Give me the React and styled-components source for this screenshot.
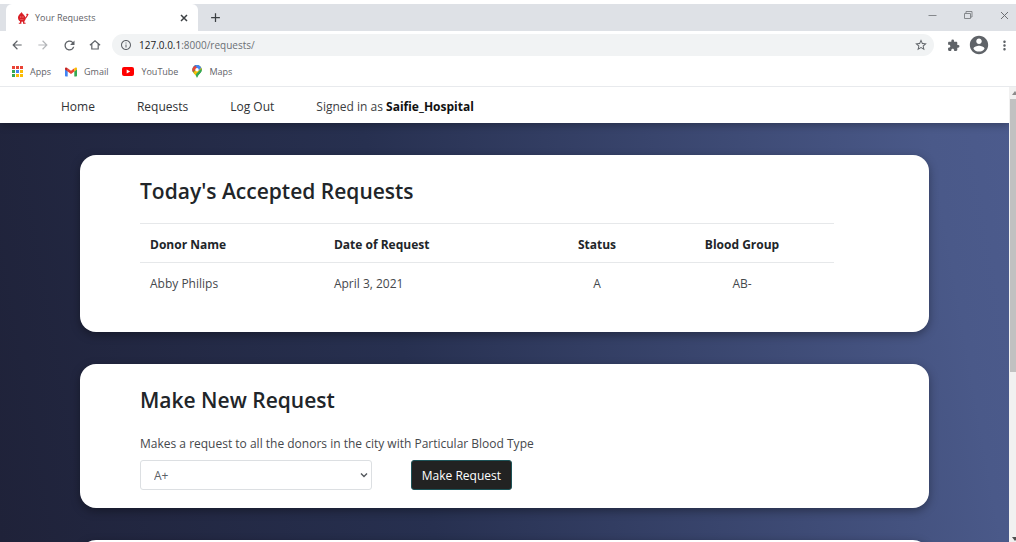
import React from "react";
import styled, { createGlobalStyle } from "styled-components";
import { MdStarBorder, MdExtension, MdMoreVert, MdArrowBack, MdArrowForward, MdRefresh, MdInfoOutline, MdAdd } from "react-icons/md";

const GlobalStyle = createGlobalStyle`
  * { box-sizing: border-box; }
  body { margin: 0; overflow: hidden; background: #fff; font-family: "Open Sans", "Noto Sans", sans-serif; font-size: 12px; color: #212529; }
  button, select { font-family: inherit; }
`;

const Browser = styled.div`
  height: 100vh;
  display: flex;
  flex-direction: column;
  overflow: hidden;
  padding-top: 4px;
`;

const TabStrip = styled.header`
  flex: none;
  display: flex;
  align-items: stretch;
  height: 27px;
  padding-left: 6px;
  background: #dee1e6;
`;

const Tab = styled.div`
  width: 192px;
  display: flex;
  align-items: center;
  padding: 0 8px 0 11px;
  gap: 6px;
  background: #fff;
  border-radius: 6px 6px 0 0;
  font-size: 9px;
  color: #5f6368;
`;

const TabTitle = styled.span`
  flex: 1;
`;

const IconButton = styled.button`
  flex: none;
  display: flex;
  align-items: center;
  justify-content: center;
  width: ${(p) => p.$width || 26}px;
  height: ${(p) => p.$height || 26}px;
  padding: 0;
  border: 0;
  background: none;
  color: ${(p) => p.$color || "#5f6368"};
`;

const WindowControls = styled.div`
  display: flex;
  gap: 12px;
  margin-left: auto;
`;

const Toolbar = styled.div`
  flex: none;
  display: flex;
  align-items: center;
  height: 28px;
  padding: 0 0 0 4px;
`;

const AddressBar = styled.div`
  flex: 1;
  display: flex;
  align-items: center;
  height: 22px;
  margin: 0 6px 0 4px;
  padding: 0 0 0 8px;
  gap: 7px;
  border-radius: 11px;
  background: #f1f3f4;
  color: #5f6368;
`;

const Address = styled.span`
  flex: 1;
  font-size: 10px;
  color: #6b6f74;

  b { font-weight: 400; color: #202124; }
`;

const Bookmarks = styled.nav`
  flex: none;
  display: flex;
  align-items: center;
  gap: 14px;
  height: 28px;
  padding: 0 12px 2px;
  border-bottom: 1px solid #e8eaed;
`;

const Bookmark = styled.a`
  display: flex;
  align-items: center;
  gap: 7px;
  font-size: 9px;
  color: #5f6368;
  text-decoration: none;
`;

const Viewport = styled.div`
  flex: 1;
  min-height: 0;
  display: flex;
`;

const Page = styled.div`
  flex: 1;
  min-width: 0;
  display: flex;
  flex-direction: column;
  overflow: hidden;
  background: linear-gradient(80deg, #1f2239 0%, #273050 40%, #4a5989 92%, #4c5b8d 100%);
`;

const SiteNav = styled.nav`
  flex: none;
  display: flex;
  align-items: center;
  gap: 42px;
  height: 36px;
  padding: 2px 61px 0;
  background: #fff;
  box-shadow: 0 2px 8px rgba(0, 0, 0, 0.3);
  color: #3d4043;
`;

const NavLink = styled.a`
  color: #303336;
  text-decoration: none;
`;

const SignedIn = styled.span`
  strong { font-weight: 700; color: #111; }
`;

const Main = styled.main`
  flex: none;
  display: flex;
  flex-direction: column;
  gap: 32px;
  padding: 32px 80px;
`;

const Card = styled.section`
  padding: 20px 95px 18px 60px;
  border-radius: 16px;
  background: #fff;
  box-shadow: 0 3px 10px rgba(0, 0, 0, 0.35);
`;

const Heading = styled.h2`
  margin: 0 0 16px;
  font-size: 21px;
  font-weight: 600;
  line-height: 32px;
`;

const Table = styled.table`
  width: 100%;
  margin-bottom: 12px;
  table-layout: fixed;
  border-collapse: collapse;
`;

const Cell = styled.td`
  width: ${(p) => p.$width};
  height: 39px;
  padding: 2px 10px 0;
  border-top: 1px solid #e6e8ea;
  text-align: ${(p) => (p.$center ? "center" : "left")};
  font-weight: ${(p) => (p.as ? 700 : 400)};
  color: ${(p) => (p.as ? "#212529" : "#45484c")};
`;

const Form = styled.form`
  display: flex;
  flex-wrap: wrap;
  gap: 6px 39px;
  padding-top: 2px;
`;

const Label = styled.label`
  flex: 0 0 100%;
  line-height: 20px;
  color: #45484c;
`;

const SelectWrap = styled.div`
  position: relative;
  flex: 0 0 33.4%;

  svg { position: absolute; right: 4px; top: 12px; pointer-events: none; }
`;

const Select = styled.select`
  display: block;
  width: 100%;
  height: 30px;
  padding: 2px 13px 0;
  border: 1px solid #dcdfe2;
  border-radius: 3px;
  appearance: none;
  background: #fff;
  font-size: 12px;
  color: #5b6066;
`;

const Submit = styled.button`
  height: 30px;
  padding: 2px 10px 0;
  border: 1px solid #1d5358;
  border-radius: 3px;
  background: #222;
  font-size: 12px;
  color: #fff;
`;

const Scrollbar = styled.div`
  flex: none;
  display: flex;
  flex-direction: column;
  align-items: stretch;
  width: 7px;
  background: #f1f1f1;
  overflow: hidden;
`;

const ScrollArrow = styled.svg`
  flex: none;
  width: 10px;
  height: 12px;
`;

const ScrollThumb = styled.div`
  flex: 0 0 60%;
  margin-left: 1px;
  margin-bottom: auto;
  background: #c1c1c1;
`;

const DropIcon = () => (
  <svg width="12" height="14" viewBox="0 0 12 14" aria-hidden="true">
    <g fill="#d91f26">
      <path d="M4.6 1 C3.6 2.8 1 3.8 1 7 C1.1 9.6 3 11 5.2 10.8 C7.8 10.8 9 9 8.6 6.8 C8.2 4.4 5.4 3 4.6 1Z" />
      <path d="M8 7 L9.7 4.6 L9.2 3.4 L10 2.4 L11.6 3.2 L10.7 5 L8.7 8Z M3 10 H4.4 V12.7 H1.8 V11.8 H3Z M6 10 H7.4 V11.8 H8.6 V12.7 H6Z" />
    </g>
    <path d="M3 5.5 H4.3 V6.6 H3Z M5.3 5.5 H6.6 V6.6 H5.3Z M3 8 Q5 9 6.8 8 L6.3 8.7 Q4.8 9.5 3.4 8.7Z" fill="#f08a84" />
  </svg>
);

const HomeIcon = () => (
  <svg width="12" height="12" viewBox="0 0 24 24" fill="none" stroke="currentColor" strokeWidth="2.4" aria-hidden="true">
    <path d="M1.8 12.6 L12 3.4 L22.2 12.6 M5.6 10 V20 H18.4 V10" />
  </svg>
);

const ProfileIcon = () => (
  <svg width="22" height="22" viewBox="0 0 24 24" fill="currentColor" aria-hidden="true">
    <path d="M12 2C6.48 2 2 6.48 2 12s4.48 10 10 10 10-4.48 10-10S17.52 2 12 2zm0 3c1.66 0 3 1.34 3 3s-1.34 3-3 3-3-1.34-3-3 1.34-3 3-3zm0 14.2c-2.5 0-4.71-1.28-6-3.22.03-1.99 4-3.08 6-3.08 1.99 0 5.97 1.09 6 3.08-1.29 1.94-3.5 3.22-6 3.22z" />
  </svg>
);

const AppsIcon = () => {
  const colors = ["#ea4335", "#ea4335", "#ea4335", "#34a853", "#4285f4", "#fbbc04", "#34a853", "#fbbc04", "#fbbc04"];
  return (
    <svg width="11" height="11" viewBox="0 0 11 11" aria-hidden="true">
      {colors.map((c, i) => (
        <rect key={i} x={(i % 3) * 4} y={Math.floor(i / 3) * 4} width="3" height="3" fill={c} />
      ))}
    </svg>
  );
};

const GmailIcon = () => (
  <svg width="12" height="10" viewBox="0 0 12 10" aria-hidden="true">
    <path d="M0 2 L2.7 4 V9.5 H.8 Q0 9.5 0 8.7Z" fill="#4285f4" />
    <path d="M12 2 L9.3 4 V9.5 H11.2 Q12 9.5 12 8.7Z" fill="#34a853" />
    <path d="M2.7 1.2 L6 3.7 L9.3 1.2 V4.4 L6 6.9 L2.7 4.4Z" fill="#ea4335" />
    <path d="M0 1.7 C0 .3 1.5 .1 2.7 1.2 V4.4 L0 2.4Z" fill="#c5221f" />
    <path d="M12 1.7 C12 .3 10.5 .1 9.3 1.2 V4.4 L12 2.4Z" fill="#fbbc04" />
  </svg>
);

const YouTubeIcon = () => (
  <svg width="12" height="9" viewBox="0 0 12 9" aria-hidden="true">
    <rect width="12" height="9" rx="2" fill="#f00" />
    <path d="M4.7 2.4 L8.2 4.5 L4.7 6.6Z" fill="#fff" />
  </svg>
);

const MapsIcon = () => (
  <svg width="10" height="13" viewBox="0 0 10 13" aria-hidden="true">
    <clipPath id="pin"><path d="M5 0 A4.7 4.7 0 0 1 9.7 4.7 C9.7 8 6 9 5 13 C4 9 .3 8 .3 4.7 A4.7 4.7 0 0 1 5 0Z" /></clipPath>
    <g clipPath="url(#pin)">
      <rect width="10" height="13" fill="#34a853" />
      <path d="M0 8.8 L10 -1 V5 L2.5 11Z" fill="#fbbc04" />
      <path d="M3 0 H10 V2 L6 6 L3 4Z" fill="#4285f4" />
      <path d="M0 0 H3 L5 3 L0 8Z" fill="#ea4335" />
      <path d="M0 0 H4 L2 2Z" fill="#1a73e8" />
      <path d="M10 3 V8 L5 13 L4 9Z" fill="#34a853" />
    </g>
    <circle cx="5" cy="4.7" r="1.7" fill="#fff" />
  </svg>
);

const bookmarks = [
  ["Apps", AppsIcon],
  ["Gmail", GmailIcon],
  ["YouTube", YouTubeIcon],
  ["Maps", MapsIcon],
];

const columns = [
  { title: "Donor Name", width: "26.5%" },
  { title: "Date of Request", width: "31.7%" },
  { title: "Status", width: "15.3%", center: true },
  { title: "Blood Group", width: "26.5%", center: true },
];

const rows = [["Abby Philips", "April 3, 2021", "A", "AB-"]];

export default function App() {
  return (
    <Browser>
      <GlobalStyle />
      <TabStrip>
        <Tab>
          <DropIcon />
          <TabTitle>Your Requests</TabTitle>
          <IconButton $width={12} $color="#3c4043" aria-label="Close tab">
            <svg width="8" height="8" viewBox="0 0 8 8"><path d="M1 1 L7 7 M7 1 L1 7" stroke="currentColor" strokeWidth="1.5" /></svg>
          </IconButton>
        </Tab>
        <IconButton $width={34} $color="#3c4043" aria-label="New tab"><MdAdd size={15} /></IconButton>
        <WindowControls>
          <IconButton $width={24} $height={22} aria-label="Minimize">
            <svg width="9" height="9" viewBox="0 0 9 9"><path d="M.5 4.5 H8.5" stroke="#85888c" /></svg>
          </IconButton>
          <IconButton $width={24} $height={22} aria-label="Restore">
            <svg width="10" height="10" viewBox="0 0 10 10" fill="none" stroke="#85888c"><path d="M1.5 3.5 H7.5 V8.5 H1.5Z M3 3.5 V1.5 H9 V7 H7.5" /></svg>
          </IconButton>
          <IconButton $width={24} $height={22} aria-label="Close">
            <svg width="9" height="9" viewBox="0 0 9 9"><path d="M1 1 L8 8 M8 1 L1 8" stroke="#6b6e72" /></svg>
          </IconButton>
        </WindowControls>
      </TabStrip>
      <Toolbar>
        <IconButton aria-label="Back"><MdArrowBack size={14} /></IconButton>
        <IconButton $color="#b4b6b9" aria-label="Forward"><MdArrowForward size={14} /></IconButton>
        <IconButton aria-label="Reload"><MdRefresh size={15} /></IconButton>
        <IconButton aria-label="Home"><HomeIcon /></IconButton>
        <AddressBar>
          <MdInfoOutline size={12} />
          <Address><b>127.0.0.1</b>:8000/requests/</Address>
          <IconButton aria-label="Bookmark"><MdStarBorder size={14} /></IconButton>
        </AddressBar>
        <IconButton aria-label="Extensions"><MdExtension size={13} /></IconButton>
        <IconButton aria-label="Profile"><ProfileIcon /></IconButton>
        <IconButton $width={24} aria-label="Menu"><MdMoreVert size={15} /></IconButton>
      </Toolbar>
      <Bookmarks aria-label="Bookmarks">
        {bookmarks.map(([name, Icon]) => (
          <Bookmark key={name} href="#"><Icon />{name}</Bookmark>
        ))}
      </Bookmarks>
      <Viewport>
        <Page>
          <SiteNav>
            <NavLink href="#">Home</NavLink>
            <NavLink href="#">Requests</NavLink>
            <NavLink href="#">Log Out</NavLink>
            <SignedIn>Signed in as <strong>Saifie_Hospital</strong></SignedIn>
          </SiteNav>
          <Main>
            <Card>
              <Heading>Today's Accepted Requests</Heading>
              <Table>
                <thead>
                  <tr>
                    {columns.map((c) => (
                      <Cell as="th" scope="col" key={c.title} $width={c.width} $center={c.center}>{c.title}</Cell>
                    ))}
                  </tr>
                </thead>
                <tbody>
                  {rows.map((row) => (
                    <tr key={row[0]}>
                      {row.map((value, i) => (
                        <Cell key={i} $center={columns[i].center}>{value}</Cell>
                      ))}
                    </tr>
                  ))}
                </tbody>
              </Table>
            </Card>
            <Card>
              <Heading>Make New Request</Heading>
              <Form onSubmit={(e) => e.preventDefault()}>
                <Label htmlFor="blood">Makes a request to all the donors in the city with Particular Blood Type</Label>
                <SelectWrap>
                  <Select id="blood" defaultValue="A+">
                    <option>A+</option>
                  </Select>
                  <svg width="8" height="7" viewBox="0 0 8 7"><path d="M1 1.5 L4 4.5 L7 1.5" fill="none" stroke="#54585d" strokeWidth="1.4" /></svg>
                </SelectWrap>
                <Submit type="submit">Make Request</Submit>
              </Form>
            </Card>
            <Card />
          </Main>
        </Page>
        <Scrollbar>
          <ScrollArrow viewBox="0 0 10 12"><path d="M3 8 L6 4 L9 8Z" fill="#8b8b8b" /></ScrollArrow>
          <ScrollThumb />
          <ScrollArrow viewBox="0 0 10 12"><path d="M3 7 H9 L6 11Z" fill="#505050" /></ScrollArrow>
        </Scrollbar>
      </Viewport>
    </Browser>
  );
}
